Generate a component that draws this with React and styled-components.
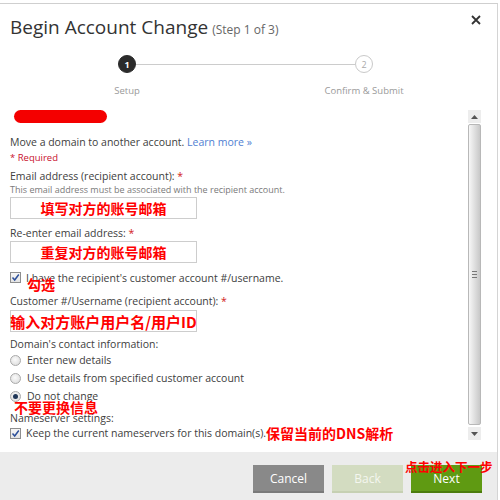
import React from "react";
import styled, { createGlobalStyle } from "styled-components";

const GlobalStyle = createGlobalStyle`
  html, body { margin: 0; padding: 0; background: #fff; }
  body { font-family: "Open Sans", "Noto Sans CJK SC", sans-serif; color: #404040; }
`;

const Dialog = styled.div`
  margin-top: 3px;
  width: 498px;
  height: 497px;
  box-sizing: border-box;
  border-top: 1px solid #cfcfcf;
  border-right: 1px solid #d4d4d4;
  display: flex;
  flex-direction: column;
`;

const Header = styled.div`
  display: flex;
  justify-content: space-between;
  align-items: flex-start;
  padding: 10px 16px 0 10px;
`;

const Title = styled.h1`
  margin: 0;
  font-size: 19px;
  line-height: 26px;
  font-weight: 400;
  color: #333;
`;

const StepNote = styled.span`
  font-size: 12px;
  color: #666;
  margin-left: 4px;
`;

const CloseButton = styled.button`
  border: 0;
  background: none;
  padding: 0;
  margin-top: 1px;
  width: 10px;
  height: 10px;
  display: flex;
`;

const CircleRow = styled.div`
  display: flex;
  align-items: center;
  margin-top: 12px;
  padding-left: 118px;
`;

const Circle = styled.div`
  width: 18px;
  height: 18px;
  box-sizing: border-box;
  border-radius: 50%;
  display: flex;
  align-items: center;
  justify-content: center;
  font-size: 9px;
  font-weight: ${(p) => (p.active ? 700 : 400)};
  background: ${(p) => (p.active ? "#2b2b2b" : "#fff")};
  color: ${(p) => (p.active ? "#fff" : "#aaa")};
  border: 1px solid ${(p) => (p.active ? "#2b2b2b" : "#c9c9c9")};
`;

const Connector = styled.div`
  width: 219px;
  height: 1px;
  background: #cccccc;
`;

const LabelRow = styled.div`
  display: flex;
  margin-top: 11px;
`;

const StepLabel = styled.div`
  width: 120px;
  margin-left: ${(p) => p.offset}px;
  text-align: center;
  font-size: 9.5px;
  line-height: 14px;
  color: #9a9a9a;
`;

const Body = styled.div`
  flex: 1;
  display: flex;
  min-height: 0;
`;

const Content = styled.div`
  flex: 1;
  padding-left: 10px;
  font-size: 10.5px;
`;

const Redacted = styled.div`
  margin: 12px 0 0 4px;
  width: 93px;
  height: 13px;
  border-radius: 7px;
  background: #f40000;
`;

const Line = styled.div`
  position: relative;
  margin-top: ${(p) => p.gap || 0}px;
  line-height: ${(p) => p.lh || 15}px;
  font-size: ${(p) => p.size || 10.5}px;
  color: ${(p) => p.color || "#404040"};
  white-space: nowrap;
`;

const Star = styled.span`
  color: #d21a1a;
`;

const LearnMore = styled.a`
  color: #4f80d2;
  text-decoration: none;
`;

const Input = styled.div`
  margin-top: ${(p) => p.gap || 0}px;
  width: 187px;
  height: 22px;
  box-sizing: border-box;
  border: 1px solid #cdcdcd;
  display: flex;
  align-items: center;
  justify-content: center;
  white-space: nowrap;
  color: #f00;
  font-family: "Noto Sans CJK SC", sans-serif;
  font-weight: 700;
  font-size: ${(p) => p.size || 14}px;
`;

const OptionRow = styled.div`
  position: relative;
  display: flex;
  align-items: center;
  height: ${(p) => p.h || 18}px;
  margin-top: ${(p) => p.gap || 0}px;
  white-space: nowrap;
  color: #404040;
`;

const Checkbox = styled.span`
  width: 11px;
  height: 11px;
  box-sizing: border-box;
  border: 1px solid #8e8e8e;
  background: linear-gradient(#f6f6f6, #e4e4e4);
  display: flex;
  align-items: center;
  justify-content: center;
  margin-right: 5px;
  flex: none;
`;

const Radio = styled.span`
  width: 11px;
  height: 11px;
  box-sizing: border-box;
  border-radius: 50%;
  border: 1px solid #a9a9a9;
  background: radial-gradient(circle at 45% 40%, #fafafa, #d8d8d8);
  display: flex;
  align-items: center;
  justify-content: center;
  margin-right: 6px;
  flex: none;
`;

const RadioDot = styled.span`
  width: 5px;
  height: 5px;
  border-radius: 50%;
  background: #1f3657;
`;

const Annotation = styled.span`
  color: #f00;
  font-family: "Noto Sans CJK SC", sans-serif;
  font-weight: 700;
  font-size: ${(p) => p.size || 14}px;
  line-height: 14px;
  white-space: nowrap;
`;

const FloatingNote = styled(Annotation)`
  position: absolute;
  left: ${(p) => p.left}px;
  top: ${(p) => p.top}px;
`;

const Scrollbar = styled.div`
  width: 13px;
  margin: 12px 16px 12px 0;
  display: flex;
  flex-direction: column;
`;

const ScrollArrow = styled.div`
  height: 13px;
  background: #ededed;
  display: flex;
  align-items: center;
  justify-content: center;
`;

const Thumb = styled.div`
  flex: 1;
  margin: 1px 0 2px;
  box-sizing: border-box;
  border: 1px solid #b8b8b8;
  border-radius: 2px;
  background: linear-gradient(to right, #f7f7f7, #e2e2e2 45%, #c8c8c8);
  display: flex;
  align-items: center;
  justify-content: center;
`;

const Grip = styled.div`
  width: 5px;
  height: 5px;
  border-top: 1px solid #777;
  border-bottom: 1px solid #777;
  position: relative;
  &::after {
    content: "";
    position: absolute;
    left: 0;
    right: 0;
    top: 2px;
    height: 1px;
    background: #777;
  }
`;

const Footer = styled.div`
  position: relative;
  height: 48px;
  background: #ececec;
  display: flex;
  justify-content: flex-end;
  align-items: flex-start;
  gap: 8px;
  padding: 13px 15px 0 0;
  box-sizing: border-box;
`;

const Button = styled.button`
  width: 71px;
  height: 28px;
  border: 0;
  border-bottom: 2px solid ${(p) => p.edge};
  background: ${(p) => p.bg};
  color: ${(p) => p.fg || "#fff"};
  font-family: "Open Sans", sans-serif;
  font-size: 12px;
  padding: 0;
`;

const Caret = ({ up }) => (
  <svg width="7" height="4" viewBox="0 0 7 4">
    <path d={up ? "M0 4 L3.5 0 L7 4 Z" : "M0 0 L3.5 4 L7 0 Z"} fill="#555" />
  </svg>
);

const Tick = () => (
  <svg width="9" height="9" viewBox="0 0 9 9">
    <path d="M1.5 4.5 L3.7 7 L7.8 1.5" fill="none" stroke="#2c4f9a" strokeWidth="1.5" />
  </svg>
);

export default function App() {
  return (
    <>
      <GlobalStyle />
      <Dialog>
        <Header>
          <Title>
            Begin Account Change<StepNote>(Step 1 of 3)</StepNote>
          </Title>
          <CloseButton aria-label="close">
            <svg width="10" height="10" viewBox="0 0 10 10">
              <path d="M1 1 L9 9 M9 1 L1 9" stroke="#333" strokeWidth="1.8" />
            </svg>
          </CloseButton>
        </Header>

        <CircleRow>
          <Circle active>1</Circle>
          <Connector />
          <Circle>2</Circle>
        </CircleRow>
        <LabelRow>
          <StepLabel offset={67}>Setup</StepLabel>
          <StepLabel offset={117}>Confirm &amp; Submit</StepLabel>
        </LabelRow>

        <Body>
          <Content>
            <Redacted />
            <Line gap={12}>
              Move a domain to another account. <LearnMore href="#">Learn more »</LearnMore>
            </Line>
            <Line size={9.5} lh={13} color="#c8102e" gap={1}>* Required</Line>

            <Line gap={5}>
              Email address (recipient account): <Star>*</Star>
            </Line>
            <Line size={9} lh={12} color="#7a7a7a">
              This email address must be associated with the recipient account.
            </Line>
            <Input gap={1}>填写对方的账号邮箱</Input>

            <Line gap={7}>
              Re-enter email address: <Star>*</Star>
            </Line>
            <Input>重复对方的账号邮箱</Input>

            <OptionRow h={15} gap={7}>
              <Checkbox><Tick /></Checkbox>
              I have the recipient's customer account #/username.
              <FloatingNote left={17} top={7}>勾选</FloatingNote>
            </OptionRow>

            <Line gap={9}>
              Customer #/Username (recipient account): <Star>*</Star>
            </Line>
            <Input gap={1} size={15}>输入对方账户用户名/用户ID</Input>

            <Line gap={5} lh={14}>Domain's contact information:</Line>
            <OptionRow>
              <Radio />
              Enter new details
            </OptionRow>
            <OptionRow>
              <Radio />
              Use details from specified customer account
            </OptionRow>
            <OptionRow>
              <Radio><RadioDot /></Radio>
              Do not change
              <FloatingNote left={4} top={13}>不要更换信息</FloatingNote>
            </OptionRow>

            <Line gap={6} lh={14}>Nameserver settings:</Line>
            <OptionRow h={16}>
              <Checkbox><Tick /></Checkbox>
              Keep the current nameservers for this domain(s).
              <Annotation>保留当前的DNS解析</Annotation>
            </OptionRow>
          </Content>

          <Scrollbar>
            <ScrollArrow><Caret up /></ScrollArrow>
            <Thumb><Grip /></Thumb>
            <ScrollArrow><Caret /></ScrollArrow>
          </Scrollbar>
        </Body>

        <Footer>
          <Button bg="#898989" edge="#7a7a7a">Cancel</Button>
          <Button bg="#d3dcc1" edge="#c6d0b2" fg="#f4f6ef">Back</Button>
          <Button bg="#5f9a12" edge="#4c7c0c">Next</Button>
          <FloatingNote left={405} top={8} size={12.5}>点击进入下一步</FloatingNote>
        </Footer>
      </Dialog>
    </>
  );
}
